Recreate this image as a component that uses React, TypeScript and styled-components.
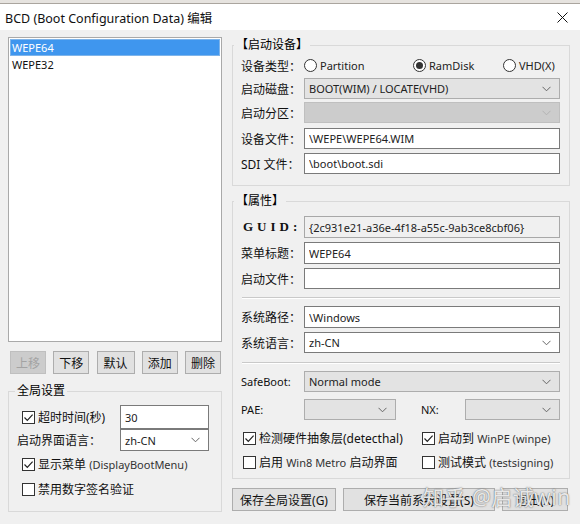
import React from 'react';
import styled, { createGlobalStyle } from 'styled-components';

const GlobalStyle = createGlobalStyle`
  html, body {
    margin: 0;
    padding: 0;
    background: #f0f0f0;
  }
  body {
    font-family: "Noto Sans", "Noto Sans CJK SC", sans-serif;
    font-size: 12px;
    color: #000;
  }
  * {
    box-sizing: border-box;
  }
`;

const Window = styled.div`
  position: relative;
  width: 580px;
  height: 524px;
  overflow: hidden;
  display: flex;
  flex-direction: column;
  background: #f0f0f0;
`;

const BehindStrip = styled.div`
  height: 4px;
  flex: none;
  background: #e6e3df;
  border-bottom: 1px solid #aaa59e;
`;

const TitleBar = styled.div`
  height: 26px;
  flex: none;
  background: #fff;
  display: flex;
  align-items: center;
  justify-content: space-between;
  padding: 0 12px 0 5px;
  font-size: 12.5px;
  color: #111;
`;

const Body = styled.div`
  display: flex;
  gap: 10px;
  padding: 7px 10px 0 8px;
`;

const LeftColumn = styled.div`
  width: 214px;
  flex: none;
  display: flex;
  flex-direction: column;
`;

const RightColumn = styled.div`
  width: 338px;
  flex: none;
  display: flex;
  flex-direction: column;
`;

const ListBox = styled.div`
  height: 305px;
  background: #fff;
  border: 1px solid #a9a9a9;
  padding: 1px;
`;

const ListItem = styled.div<{ $selected?: boolean }>`
  height: 17px;
  line-height: 15px;
  padding-left: 1px;
  font-size: 11px;
  color: ${p => (p.$selected ? '#fff' : '#111')};
  background: ${p => (p.$selected ? '#3f96ee' : 'transparent')};
  border: 1px solid ${p => (p.$selected ? '#7eb4ea' : 'transparent')};
`;

const ButtonRow = styled.div`
  display: flex;
  justify-content: space-between;
  margin-top: 9px;
  padding: 0 1px 0 2px;
`;

const Button = styled.button<{ $w?: number; $disabled?: boolean }>`
  width: ${p => p.$w ?? 36}px;
  height: 23px;
  padding: 0;
  font: inherit;
  font-size: 12px;
  white-space: nowrap;
  color: ${p => (p.$disabled ? '#a3a3a3' : '#111')};
  background: ${p => (p.$disabled ? '#cccccc' : '#e1e1e1')};
  border: 1px solid ${p => (p.$disabled ? '#bfbfbf' : '#adadad')};
`;

const Group = styled.fieldset<{ $h?: number }>`
  margin: 0;
  padding: 0;
  min-width: 0;
  height: ${p => (p.$h ? `${p.$h}px` : 'auto')};
  border: 1px solid #d9d9d9;
`;

const Legend = styled.legend<{ $indent: number }>`
  margin-left: ${p => p.$indent}px;
  padding: 0 2px;
  line-height: 16px;
  font-size: 12px;
`;

const GlobalGroup = styled(Group)`
  margin-top: 9px;
`;

const PropsGroup = styled(Group)`
  margin-top: 7px;
`;

const GlobalGrid = styled.div`
  display: grid;
  grid-template-columns: 103px 89px;
  grid-template-rows: 24px 22px 26px 24px;
  align-items: center;
  padding: 6px 0 0 8px;
`;

const Form = styled.div<{ $top: number }>`
  display: flex;
  flex-direction: column;
  padding: ${p => p.$top}px 9px 0 8px;
`;

const Row = styled.div<{ $h?: number; $mt?: number }>`
  display: flex;
  align-items: center;
  height: ${p => p.$h ?? 22}px;
  margin-top: ${p => p.$mt ?? 0}px;
`;

const Label = styled.span<{ $w?: number; $latin?: boolean; $pl?: number }>`
  width: ${p => p.$w ?? 63}px;
  flex: none;
  white-space: nowrap;
  padding-left: ${p => p.$pl ?? 0}px;
  font-size: ${p => (p.$latin ? 11 : 12)}px;
  color: #111;
`;

const GuidLabel = styled(Label)`
  font-family: "Liberation Serif", "DejaVu Serif", serif;
  font-weight: bold;
  font-size: 13px;
  letter-spacing: 4px;
  padding-left: 2px;
`;

const TextInput = styled.input<{ $w?: number; $readOnlyLook?: boolean }>`
  width: ${p => p.$w ?? 256}px;
  height: 100%;
  margin: 0;
  padding: 0 0 0 4px;
  font: inherit;
  font-size: 11px;
  color: #222;
  background: ${p => (p.$readOnlyLook ? '#f0f0f0' : '#fff')};
  border: 1px solid ${p => (p.$readOnlyLook ? '#a8a8a8' : '#7a7a7a')};
  outline: none;
`;

type SelectKind = 'list' | 'edit' | 'disabled';

const SelectBox = styled.div<{ $w?: number; $kind: SelectKind }>`
  width: ${p => p.$w ?? 256}px;
  height: 100%;
  display: flex;
  align-items: center;
  justify-content: space-between;
  padding: 0 8px 0 4px;
  font-size: 11px;
  color: #222;
  background: ${p =>
    p.$kind === 'edit' ? '#fff' : p.$kind === 'disabled' ? '#cccccc' : '#e3e3e3'};
  border: 1px solid
    ${p => (p.$kind === 'edit' ? '#7a7a7a' : p.$kind === 'disabled' ? '#bfbfbf' : '#adadad')};
`;

const Chevron = ({ color = '#666' }: { color?: string }) => (
  <svg width="9" height="6" viewBox="0 0 9 6">
    <path d="M0.5 0.8 L4.5 4.8 L8.5 0.8" fill="none" stroke={color} strokeWidth="1" />
  </svg>
);

const Select: React.FC<{ value?: string; w?: number; kind?: SelectKind }> = ({
  value = '',
  w,
  kind = 'list',
}) => (
  <SelectBox $w={w} $kind={kind}>
    <span>{value}</span>
    <Chevron color={kind === 'disabled' ? '#b3b3b3' : '#666'} />
  </SelectBox>
);

const RadioGroup = styled.div`
  display: grid;
  grid-template-columns: 109px 90px 1fr;
  align-items: center;
`;

const RadioItem = styled.span`
  display: flex;
  align-items: center;
  gap: 3px;
  font-size: 11px;
  color: #222;
`;

const RadioCircle = styled.span<{ $on?: boolean }>`
  width: 13px;
  height: 13px;
  border-radius: 50%;
  border: 1px solid #333;
  background: #fff;
  display: flex;
  align-items: center;
  justify-content: center;
  &::after {
    content: '';
    width: 7px;
    height: 7px;
    border-radius: 50%;
    background: ${p => (p.$on ? '#333' : 'transparent')};
  }
`;

const Radio: React.FC<{ label: string; on?: boolean }> = ({ label, on }) => (
  <RadioItem>
    <RadioCircle $on={on} />
    {label}
  </RadioItem>
);

const CheckItem = styled.span<{ $indent?: number }>`
  display: flex;
  align-items: center;
  gap: 3px;
  padding-left: ${p => p.$indent ?? 0}px;
  white-space: nowrap;
  font-size: 12px;
  color: #111;
`;

const Latin = styled.span`
  font-size: 11px;
  color: #333;
`;

const Box = styled.span`
  width: 13px;
  height: 13px;
  flex: none;
  border: 1px solid #333;
  background: #fff;
  display: flex;
  align-items: center;
  justify-content: center;
`;

const Check: React.FC<{ on?: boolean; indent?: number; children: React.ReactNode }> = ({
  on,
  indent,
  children,
}) => (
  <CheckItem $indent={indent}>
    <Box>
      {on && (
        <svg width="11" height="11" viewBox="0 0 11 11">
          <path d="M1.5 5.5 L4.3 8.3 L9.6 2.6" fill="none" stroke="#222" strokeWidth="1.2" />
        </svg>
      )}
    </Box>
    <span>{children}</span>
  </CheckItem>
);

const Separator = styled.div<{ $mt: number; $mb: number }>`
  width: 318px;
  height: 2px;
  margin: ${p => p.$mt}px 0 ${p => p.$mb}px 1px;
  border-top: 1px solid #c9c9c9;
  border-bottom: 1px solid #fff;
`;

const CheckGrid = styled.div`
  display: grid;
  grid-template-columns: 179px 1fr;
  grid-auto-rows: 24px;
  align-items: center;
  margin-top: 6px;
  padding-left: 2px;
`;

const BottomButtons = styled.div`
  display: flex;
  gap: 7px;
  margin-top: 9px;
`;

const Watermark = styled.div`
  position: absolute;
  left: 423px;
  top: 481px;
  font-size: 21px;
  letter-spacing: 0.5px;
  color: rgba(255, 255, 255, 0.85);
  text-shadow: 0 0 1px rgba(90, 90, 90, 0.9), 0 0 2px rgba(120, 120, 120, 0.6);
  pointer-events: none;
  white-space: nowrap;
`;

export default function App() {
  return (
    <>
      <GlobalStyle />
      <Window>
        <BehindStrip />
        <TitleBar>
          <span>BCD (Boot Configuration Data) 编辑</span>
          <svg width="11" height="11" viewBox="0 0 11 11">
            <path d="M0.5 0.5 L10.5 10.5 M10.5 0.5 L0.5 10.5" stroke="#111" strokeWidth="1" />
          </svg>
        </TitleBar>
        <Body>
          <LeftColumn>
            <ListBox>
              <ListItem $selected>WEPE64</ListItem>
              <ListItem>WEPE32</ListItem>
            </ListBox>
            <ButtonRow>
              <Button $disabled>上移</Button>
              <Button>下移</Button>
              <Button $w={38}>默认</Button>
              <Button>添加</Button>
              <Button>删除</Button>
            </ButtonRow>
            <GlobalGroup $h={129}>
              <Legend $indent={6}>全局设置</Legend>
              <GlobalGrid>
                <Check on indent={5}>
                  超时时间(秒)
                </Check>
                <TextInput $w={89} defaultValue="30" />
                <Label>启动界面语言：</Label>
                <Select value="zh-CN" w={89} kind="edit" />
                <Check on indent={5}>
                  显示菜单 <Latin>(DisplayBootMenu)</Latin>
                </Check>
                <span />
                <Check indent={5}>禁用数字签名验证</Check>
              </GlobalGrid>
            </GlobalGroup>
          </LeftColumn>

          <RightColumn>
            <Group $h={149}>
              <Legend $indent={1}>【启动设备】</Legend>
              <Form $top={3}>
                <Row $h={19}>
                  <Label>设备类型：</Label>
                  <RadioGroup>
                    <Radio label="Partition" />
                    <Radio label="RamDisk" on />
                    <Radio label="VHD(X)" />
                  </RadioGroup>
                </Row>
                <Row $h={21} $mt={3}>
                  <Label>启动磁盘：</Label>
                  <Select value="BOOT(WIM) / LOCATE(VHD)" />
                </Row>
                <Row $h={21} $mt={3}>
                  <Label>启动分区：</Label>
                  <Select kind="disabled" />
                </Row>
                <Row $h={21} $mt={5}>
                  <Label>设备文件：</Label>
                  <TextInput defaultValue="\WEPE\WEPE64.WIM" />
                </Row>
                <Row $h={21} $mt={4}>
                  <Label>SDI 文件：</Label>
                  <TextInput defaultValue="\boot\boot.sdi" />
                </Row>
              </Form>
            </Group>

            <PropsGroup $h={286}>
              <Legend $indent={1}>【属性】</Legend>
              <Form $top={7}>
                <Row>
                  <GuidLabel>GUID:</GuidLabel>
                  <TextInput $readOnlyLook readOnly defaultValue="{2c931e21-a36e-4f18-a55c-9ab3ce8cbf06}" />
                </Row>
                <Row $mt={4}>
                  <Label>菜单标题：</Label>
                  <TextInput defaultValue="WEPE64" />
                </Row>
                <Row $h={21} $mt={4}>
                  <Label>启动文件：</Label>
                  <TextInput defaultValue="" />
                </Row>
                <Separator $mt={8} $mb={7} />
                <Row>
                  <Label>系统路径：</Label>
                  <TextInput defaultValue="\Windows" />
                </Row>
                <Row $h={21} $mt={4}>
                  <Label>系统语言：</Label>
                  <Select value="zh-CN" kind="edit" />
                </Row>
                <Separator $mt={9} $mb={7} />
                <Row $h={21}>
                  <Label $latin>SafeBoot:</Label>
                  <Select value="Normal mode" />
                </Row>
                <Row $h={21} $mt={7}>
                  <Label $latin>PAE:</Label>
                  <Select w={92} />
                  <Label $latin $w={69} $pl={25}>
                    NX:
                  </Label>
                  <Select w={95} />
                </Row>
                <CheckGrid>
                  <Check on>检测硬件抽象层(detecthal)</Check>
                  <Check on>
                    启动到 <Latin>WinPE (winpe)</Latin>
                  </Check>
                  <Check>
                    启用 <Latin>Win8 Metro</Latin> 启动界面
                  </Check>
                  <Check>
                    测试模式 <Latin>(testsigning)</Latin>
                  </Check>
                </CheckGrid>
              </Form>
            </PropsGroup>

            <BottomButtons>
              <Button $w={104}>保存全局设置(G)</Button>
              <Button $w={152}>保存当前系统设置(S)</Button>
              <Button $w={66}>退出(X)</Button>
            </BottomButtons>
          </RightColumn>
        </Body>
        <Watermark>知乎 @启诚win</Watermark>
      </Window>
    </>
  );
}
